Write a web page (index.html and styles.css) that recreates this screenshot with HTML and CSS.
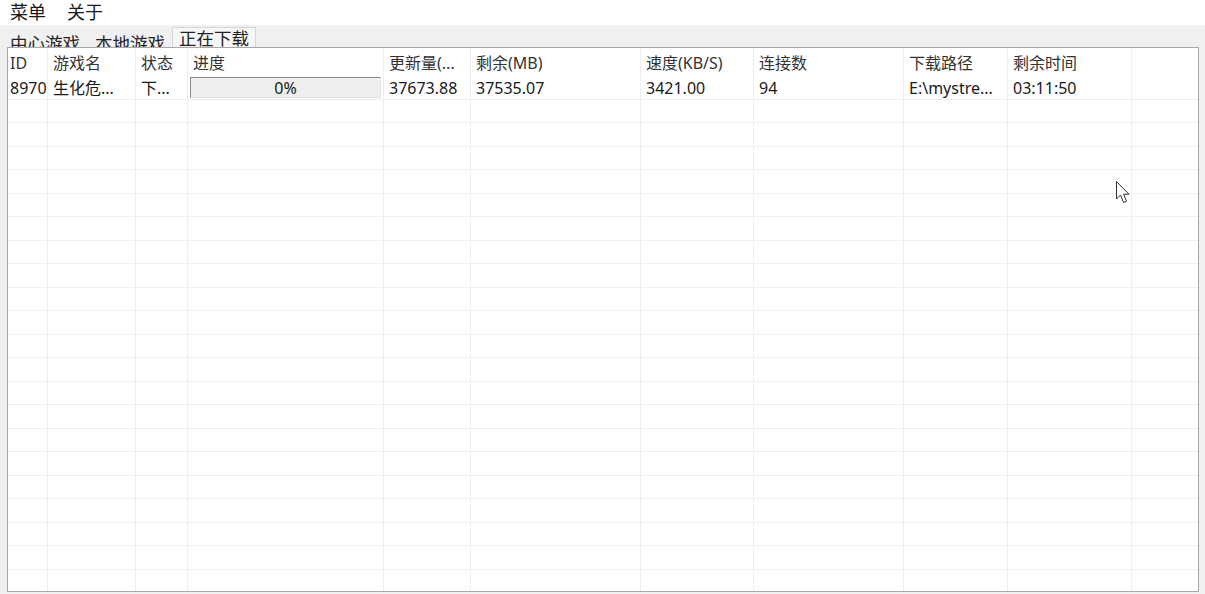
FILE: index.html
```html
<!DOCTYPE html>
<html lang="zh-CN">
<head>
<meta charset="UTF-8">
<title>下载管理</title>
<link rel="stylesheet" href="styles.css">
</head>
<body>

<!-- 菜单栏 -->
<div class="menubar">
 <span>菜单</span>
 <span>关于</span>
</div>

<!-- 标签页 -->
<div class="tabs">
 <div class="tab">中心游戏</div>
 <div class="tab">本地游戏</div>
 <div class="tab active">正在下载</div>
</div>

<div class="panel">
 <div class="grid" id="grid">
  <div class="row head">
   <div class="cell">ID</div>
   <div class="cell">游戏名</div>
   <div class="cell">状态</div>
   <div class="cell">进度</div>
   <div class="cell">更新量(...</div>
   <div class="cell">剩余(MB)</div>
   <div class="cell">速度(KB/S)</div>
   <div class="cell">连接数</div>
   <div class="cell">下载路径</div>
   <div class="cell">剩余时间</div>
   <div class="cell"></div>
  </div>
  <div class="row">
   <div class="cell">8970</div>
   <div class="cell">生化危...</div>
   <div class="cell">下...</div>
   <div class="cell bar-cell"><div class="bar">0%</div></div>
   <div class="cell">37673.88</div>
   <div class="cell">37535.07</div>
   <div class="cell">3421.00</div>
   <div class="cell">94</div>
   <div class="cell">E:\mystre...</div>
   <div class="cell">03:11:50</div>
   <div class="cell"></div>
  </div>
 </div>
</div>

<!-- 鼠标指针 -->
<svg class="pointer" width="18" height="26" viewBox="0 0 18 26">
 <path d="M1.5 1.5 L1.5 19 L5.5 15 L8.5 22.5 L11.5 21.2 L8.6 14.2 L14 14.2 Z" fill="#fff" stroke="#333" stroke-width="1" stroke-linejoin="round"/>
</svg>

<script>
// 空行
let g=document.getElementById('grid');
for(let i=0;i<21;i++){
 let r=document.createElement('div');
 r.className='row';
 for(let j=0;j<11;j++){
  let c=document.createElement('div');
  c.className='cell';
  r.appendChild(c);
 }
 g.appendChild(r);
}
</script>

</body>
</html>
```

FILE: styles.css
```css
body{
 margin:0;
 height:594px;
 background:#f0f0f0;
 color:#1a1a1a;
 font-family:"Noto Sans","Noto Sans CJK SC",sans-serif;
 font-size:16px;
 overflow:hidden;
 position:relative;
}

/* 菜单栏 */
.menubar{
 height:25px;
 background:#fff;
 display:flex;
 align-items:center;
 gap:21px;
 padding-left:10px;
 font-size:18px;
 line-height:25px;
}

/* 标签页 */
.tabs{
 height:22px;
 display:flex;
 align-items:flex-end;
 overflow:hidden;
 padding-left:3px;
 font-size:17.5px;
}
.tab{
 height:24px;
 line-height:29px;
 padding:0 7px;
 margin-bottom:-6px;
 color:#222;
}
.tab + .tab{
 margin-left:1px;
}
.tab.active{
 height:19px;
 line-height:20px;
 margin-bottom:0;
 margin-left:0;
 padding:0 6px;
 background:#f7f7f7;
 border:1px solid #d6d6d6;
 border-bottom:none;
}

/* 列表区域 */
.panel{
 height:543px;
 margin:0 6px 0 7px;
 border:1px solid #a8a8a8;
 background:#fff;
 overflow:hidden;
}

.row{
 display:grid;
 grid-template-columns:40px 88px 52px 196px 87px 170px 113px 150px 104px 124px 1fr;
 height:23.5px;
 border-bottom:1px solid #efefef;
 box-sizing:border-box;
}
.row.head{
 height:28px;
 border-bottom:none;
 color:#333;
}

.cell{
 border-right:1px solid #efefef;
 padding-left:5px;
 line-height:25px;
 white-space:nowrap;
 overflow:hidden;
}
.cell:first-child{
 padding-left:2px;
}
.row.head .cell{
 line-height:31px;
}
.cell:last-child{
 border-right:none;
}

/* 进度条 */
.bar-cell{
 padding:1px 2px 0 2px;
}
.bar{
 height:21px;
 line-height:21px;
 box-sizing:border-box;
 background:#efefef;
 border:1px solid #e3e3e3;
 border-top-color:#8a8a8a;
 border-left-color:#8a8a8a;
 text-align:center;
}

.pointer{
 position:absolute;
 left:1115px;
 top:180px;
}
```
